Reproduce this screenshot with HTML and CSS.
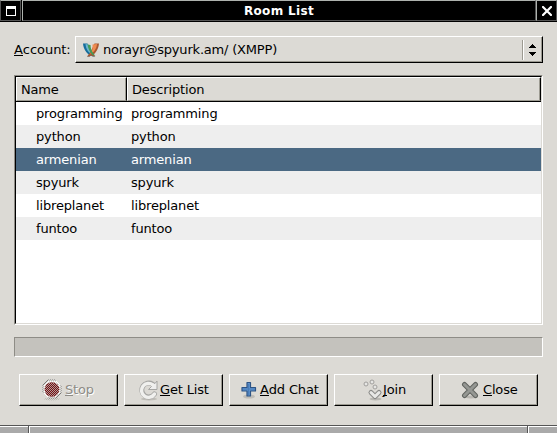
FILE: index.html
```html
<!DOCTYPE html>
<html lang="en">
<head>
<meta charset="utf-8">
<title>Room List</title>
<link rel="stylesheet" href="styles.css">
</head>
<body>
<div class="window">
  <header class="titlebar">
    <div class="tb-cell tb-menu"><svg width="10" height="10" viewBox="0 0 10 10" shape-rendering="crispEdges"><path d="M0 0h10v10H0zM1 3v6h8V3z" fill="#fff" fill-rule="evenodd"/></svg></div>
    <div class="tb-cell tb-title">Room List</div>
    <div class="tb-cell tb-close"><svg width="10" height="10" viewBox="0 0 10 10"><path d="M1 1l8 8M9 1l-8 8" stroke="#fff" stroke-width="2.2" stroke-linecap="square"/></svg></div>
  </header>
  <main class="content">
    <div class="account">
      <label class="account-label"><u>A</u>ccount:</label>
      <div class="combo">
        <svg class="xmpp" width="16" height="14" viewBox="0 0 16 14"><path d="M0 0.500h4.500L9 10l3 3.500H9.500L8 12.500 6.500 13.500H4l2-1.500C3 9 .5 6 0 .5z" fill="#176d9c"/><path d="M2.500 1l3 .5C6 6 7 8 9 11.500C5 9 3 6 2.500 1z" fill="#6db5d0"/><path d="M16 .5h-4.500L7 10l-3 3.500h2.500L8 12.500l3 1 1.500-.5-2-1C13 9 15.500 6 16 .5z" fill="#a9572f"/><path d="M14 1L9.500 1.500C10 6 9 8 7 11.500C11 9 13.500 6 14 1z" fill="#ef8b50"/><path d="M4.500 1.500l3 .5C7.500 6 9 9 12 12.500L9.500 12C7 9 5 6 4.500 1.500z" fill="#459c57"/></svg>
        <span class="combo-text">norayr@spyurk.am/ (XMPP)</span>
        <span class="combo-arrows"><svg width="7" height="12" viewBox="0 0 7 12" shape-rendering="crispEdges"><path d="M3 0h1v1h1v1h1v1h1v1H0V3h1V2h1V1h1zM0 8h7v1H6v1H5v1H4v1H3v-1H2v-1H1V9H0z"/></svg></span>
      </div>
    </div>
    <div class="list">
      <div class="list-inner">
        <div class="row head"><div class="th">Name</div><div class="th">Description</div></div>
        <div class="row"><span>programming</span><span>programming</span></div>
        <div class="row alt"><span>python</span><span>python</span></div>
        <div class="row selected"><span>armenian</span><span>armenian</span></div>
        <div class="row alt"><span>spyurk</span><span>spyurk</span></div>
        <div class="row"><span>libreplanet</span><span>libreplanet</span></div>
        <div class="row alt"><span>funtoo</span><span>funtoo</span></div>
      </div>
    </div>
    <div class="progress"></div>
    <div class="actions">
      <button class="btn stop" disabled><svg width="22" height="22" viewBox="0 0 22 22"><defs><pattern id="dither" width="2" height="2" patternUnits="userSpaceOnUse"><path d="M0 0h1v1H0zM1 1h1v1H1z" fill="#dcdad5" shape-rendering="crispEdges"/></pattern><pattern id="dither-core" width="2" height="2" patternUnits="userSpaceOnUse"><path d="M0 0h1v1H0zM1 1h1v1H1z" fill="#a9a09c" shape-rendering="crispEdges"/></pattern></defs><ellipse cx="11" cy="20" rx="8" ry="1.5" fill="#b9b7b2"/><path d="M7 1h8l5 5v8l-5 5H7l-5-5V6z" fill="#fff" stroke="#777"/><path d="M0 0h22v22H0z" fill="url(#dither)"/><circle cx="11" cy="10.5" r="7.3" fill="#7c0a10"/><circle cx="11" cy="10.5" r="7.3" fill="url(#dither-core)"/></svg><span><u>S</u>top</span></button>
      <button class="btn get"><svg width="22" height="22" viewBox="0 0 22 22"><ellipse cx="11" cy="20" rx="8" ry="1.5" fill="#aaa8a3" opacity=".6"/><path d="M16.500 15A7 7 0 1 1 14.500 5" fill="none" stroke="#a6a6a4" stroke-width="5" stroke-linecap="round"/><path d="M19 2v8.500h-8.500l3-3L12 6l3.500-2L17 4.500z" fill="#eee" stroke="#a6a6a4"/><path d="M16.500 15A7 7 0 1 1 15 6" fill="none" stroke="#f0f0ee" stroke-width="3.400" stroke-linecap="round"/></svg><span><u>G</u>et List</span></button>
      <button class="btn add"><svg width="18" height="18" viewBox="0 0 18 18"><ellipse cx="9" cy="15.5" rx="6" ry="2" fill="#aaa8a3" opacity=".6"/><path d="M7 1.5h3.5v5h5V10h-5v5H7v-5H2V6.500h5z" fill="#5f92cc" stroke="#2d5486" stroke-width="1.2" stroke-linejoin="round"/><path d="M3 8h12M8.500 3v11" stroke="#497db9"/></svg><span><u>A</u>dd Chat</span></button>
      <button class="btn join"><svg width="20" height="22" viewBox="0 0 20 22"><ellipse cx="12.500" cy="20" rx="6" ry="1.500" fill="#aaa8a3" opacity=".7"/><g fill="#e6e6e4" stroke="#a09f9c"><circle cx="3" cy="5" r="2"/><circle cx="9" cy="3" r="2"/><circle cx="12" cy="8" r="2"/></g><path d="M8 13.500l4 4 4-4" fill="none" stroke="#8a8a88" stroke-width="5" stroke-linecap="round" stroke-linejoin="round"/><path d="M8 13.500l4 4 4-4" fill="none" stroke="#e8e8e6" stroke-width="3" stroke-linecap="round" stroke-linejoin="round"/></svg><span><u>J</u>oin</span></button>
      <button class="btn close"><svg width="18" height="18" viewBox="0 0 18 18"><ellipse cx="10" cy="16" rx="7" ry="1.500" fill="#aaa8a3" opacity=".7"/><path d="M3.500 3.500l11 11M14.500 3.500l-11 11" stroke="#60635f" stroke-width="5" stroke-linecap="round"/><path d="M3.500 3.500l11 11M14.500 3.500l-11 11" stroke="#959793" stroke-width="3" stroke-linecap="round"/></svg><span><u>C</u>lose</span></button>
    </div>
  </main>
  <footer class="grip"><i></i><i></i><i></i></footer>
</div>
</body>
</html>
```
FILE: styles.css
```css
* { box-sizing: border-box; }
body { margin: 0; font: 13px/16px "DejaVu Sans", sans-serif; letter-spacing: -.16px; color: #000; }
svg { display: block; flex: none; }
u { text-decoration: none; border-bottom: 1px solid currentColor; display: inline-block; height: 14px; }
.window { width: 557px; height: 433px; display: flex; flex-direction: column; background: #dcdad5; overflow: hidden; }

.titlebar { display: flex; height: 22px; background: #000; border-bottom: 1px solid #000; }
.tb-cell { display: flex; align-items: center; justify-content: center; border: 1px solid; border-color: #aeb2ae #555 #555 #aeb2ae; }
.tb-menu { width: 21px; margin-right: 1px; border-left-color: #555; }
.tb-title { flex: 1; color: #fff; font-weight: bold; font-size: 12px; letter-spacing: .35px; }
.tb-close { width: 21px; margin-left: 0; }

.content { height: 403px; padding: 14px 14px 0; }
.account { display: flex; align-items: center; height: 27px; }
.account-label { width: 61px; letter-spacing: -.05px; }
.combo { display: flex; align-items: center; width: 468px; height: 27px; padding-left: 7px; border: 1px solid; border-color: #fff #000 #000 #fff; box-shadow: inset -1px -1px #9c9a91; }
.combo-text { flex: 1; margin-left: 4px; letter-spacing: -.19px; }
.combo-arrows { display: flex; align-items: center; width: 20px; height: 20px; padding-left: 6px; border-left: 1px solid #9c9a91; box-shadow: inset 1px 0 #fff; }

.list { width: 529px; height: 250px; margin-top: 12px; border: 1px solid; border-color: #8e8c86 #fff #fff #8e8c86; }
.list-inner { height: 248px; background: #fff; border: 1px solid; border-color: #000 #dcdad5 #dcdad5 #000; }
.row { display: grid; grid-template-columns: 111px 1fr; align-items: center; height: 23px; }
.row span { padding-left: 4px; }
.row span:first-child { padding-left: 20px; }
.alt { background: #eee; }
.selected { background: #4b6983; color: #fff; }
.head { height: 25px; background: #dcdad5; border-bottom: 1px solid #000; }
.th { height: 24px; padding: 4px 0 0 4px; border: 1px solid; border-color: #fff #000 #9c9a91 #fff; box-shadow: inset -1px 0 #9c9a91; }

.progress { width: 529px; height: 20px; margin-top: 12px; background: #c4c2bd; border: 1px solid; border-color: #8e8c86 #fff #fff #8e8c86; }
.actions { display: flex; gap: 6px; margin: 17px 0 0 5px; }
.btn { display: flex; align-items: center; width: 99px; height: 32px; padding: 0; font: inherit; letter-spacing: inherit; color: #000; background: #dcdad5; border: 1px solid; border-color: #fff #000 #000 #fff; box-shadow: inset -1px -1px #9c9a91; white-space: nowrap; }
.stop { padding-left: 21px; color: #8e8c86; text-shadow: 1px 1px #fff; }
.stop span { margin-left: 2px; }
.get { padding-left: 13px; }
.get span { margin-left: 0; }
.add { padding-left: 10px; }
.add span { margin-left: 2px; }
.join { padding-left: 28px; }
.join span { margin-left: 0; }
.close { padding-left: 21px; }
.close span { margin-left: 4px; }

.grip { display: flex; flex: 1; border-top: 1px solid #555; background: #aaa; }
.grip i { box-shadow: inset 1px 1px #fff; flex: 1; }
.grip i:first-child { flex: 0 0 29px; border-right: 1px solid #555; box-shadow: inset 0 1px #fff; }
.grip i:last-child { flex: 0 0 30px; border-left: 1px solid #555; }
```
